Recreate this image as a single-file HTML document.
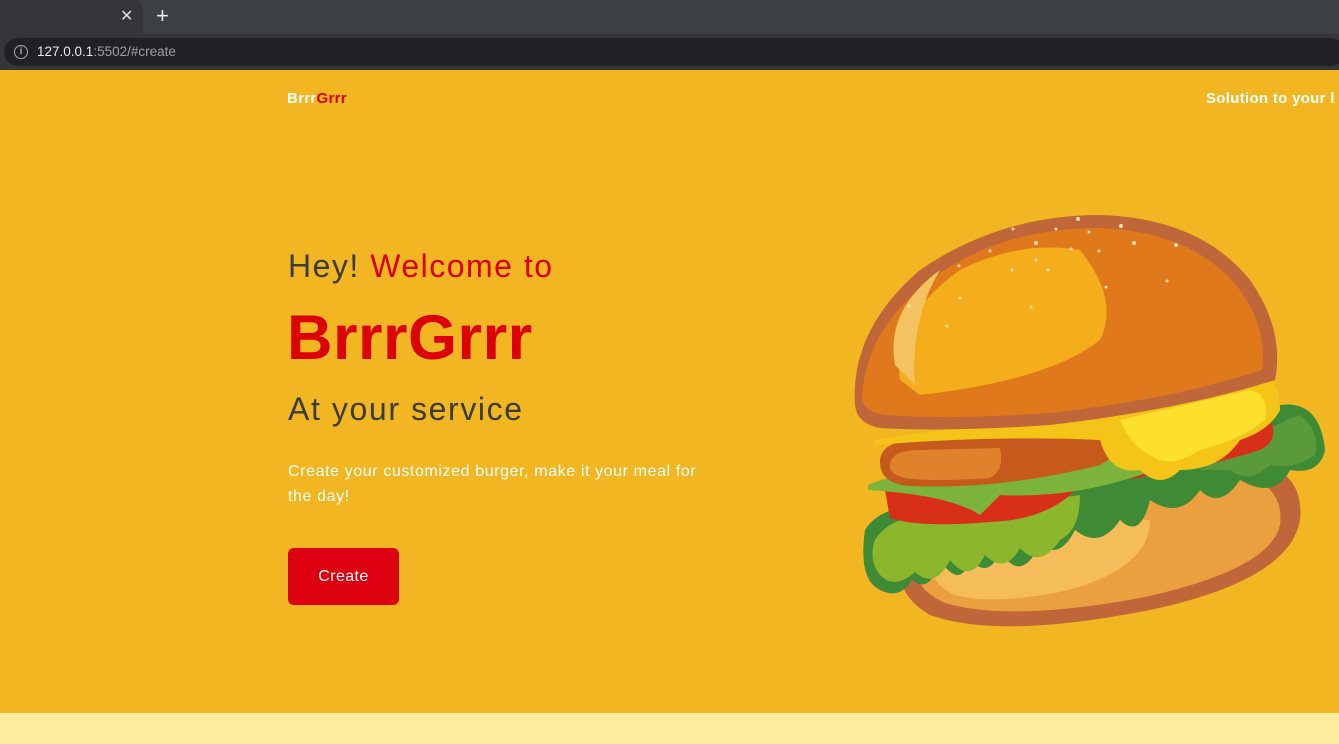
<!DOCTYPE html>
<html><head><meta charset="utf-8"><style>
*{margin:0;padding:0;box-sizing:border-box}
body{width:1339px;height:744px;overflow:hidden;font-family:"Liberation Sans",sans-serif;background:#f2b622;position:relative}
.tabs{position:absolute;left:0;top:0;width:1339px;height:34px;background:#3c3f43}
.tab{position:absolute;left:0;top:0;width:143px;height:34px;background:#35363a;border-radius:0 8px 0 0}
.x{position:absolute;left:120px;top:6px;color:#ddd;font-size:16px}
.plus{position:absolute;left:156px;top:3px;color:#eee;font-size:22px}
.bar{position:absolute;left:0;top:34px;width:1339px;height:36px;background:#35363a}
.pill{position:absolute;left:4px;top:4px;width:1340px;height:28px;background:#202124;border-radius:14px}
.info{position:absolute;left:10px;top:7px;width:14px;height:14px;border:1.5px solid #aaa;border-radius:50%;color:#aaa;font-size:10px;text-align:center;line-height:11px;font-weight:bold}
.url{position:absolute;left:33px;top:6px;font-size:13.5px;color:#9aa0a6}
.url b{color:#e8eaed;font-weight:normal}
.abs{position:absolute;white-space:nowrap}
.red{color:#dc0000}
</style></head><body>
<div class="tabs"><div class="tab"><span class="x">✕</span></div><span class="plus">+</span></div>
<div class="bar"><div class="pill"><div class="info">i</div><div class="url"><b>127.0.0.1</b>:5502/#create</div></div></div>
<div class="abs" style="left:287px;top:90px;font-size:15px;font-weight:bold;color:#fff;letter-spacing:0.3px">Brrr<span class="red">Grrr</span></div>
<div class="abs" style="left:1206px;top:90px;font-size:15px;font-weight:bold;color:#fff;letter-spacing:0.3px">Solution to your l</div>
<div class="abs" style="left:288px;top:248px;font-size:32px;color:#3b3b3b;letter-spacing:1.5px">Hey! <span class="red">Welcome to</span></div>
<div class="abs" style="left:287px;top:302px;font-size:63px;font-weight:bold;color:#dc0000;letter-spacing:0.5px">BrrrGrrr</div>
<div class="abs" style="left:288px;top:391px;font-size:32px;color:#3b3b3b;letter-spacing:1.6px">At your service</div>
<div class="abs" style="left:288px;top:459px;font-size:16px;color:#fff;line-height:25px;white-space:normal;width:432px;letter-spacing:0.6px">Create your customized burger, make it your meal for the day!</div>
<div class="abs" style="left:288px;top:548px;width:111px;height:57px;background:#dc0010;border-radius:6px;color:#fff;font-size:16px;text-align:center;line-height:57px;letter-spacing:0.4px">Create</div>
<div class="abs" style="left:0;top:713px;width:1339px;height:31px;background:#feeb9c"></div>
<svg class="abs" style="left:0;top:0" width="1339" height="744">
<path d="M900 560 Q905 480 1000 470 L1250 460 Q1305 470 1300 520 Q1290 580 1150 610 Q1000 640 930 615 Q895 595 900 560Z" fill="#c0673a"/>
<path d="M915 560 Q920 495 1010 485 L1240 475 Q1285 485 1280 525 Q1270 570 1140 598 Q1010 622 945 603 Q912 588 915 560Z" fill="#eba040"/>
<path d="M930 560 Q940 520 1010 510 L1150 520 Q1150 570 1060 592 Q990 605 955 595 Q928 582 930 560Z" fill="#f5bd5a"/>
<path d="M865 530 Q880 505 930 505 L1100 480 Q1200 470 1280 405 Q1320 400 1325 450 Q1320 475 1290 470 Q1275 500 1240 480 Q1220 510 1200 490 Q1180 520 1150 500 Q1140 540 1120 520 Q1100 550 1075 530 Q1060 560 1040 545 Q1020 585 1000 550 Q990 580 970 560 Q960 590 940 560 Q930 595 912 580 Q900 600 880 590 Q858 580 865 530Z" fill="#3e8a35"/>
<path d="M875 540 Q890 515 935 515 L1080 495 Q1080 530 1060 540 Q1040 570 1020 548 Q1005 575 985 555 Q970 585 950 560 Q935 590 915 572 Q895 590 880 575 Q868 560 875 540Z" fill="#8cb62c"/>
<path d="M1200 470 Q1280 420 1300 415 Q1320 430 1315 455 Q1295 470 1270 465 Q1250 485 1230 470Z" fill="#5b9a3a"/>
<path d="M885 490 L1000 485 L1270 420 Q1280 440 1260 450 Q1180 475 1080 485 Q1050 520 990 522 Q920 528 890 518Z" fill="#d83018"/>
<path d="M868 485 Q900 470 1000 470 L1200 450 Q1100 500 1000 495 L980 515 Q950 495 868 490Z" fill="#7cb33a"/>
<path d="M880 462 Q880 440 920 440 L1110 425 Q1130 450 1100 465 Q1000 490 910 486 Q880 484 880 462Z" fill="#c55a1c"/>
<path d="M890 464 Q892 450 920 450 L1000 448 Q1005 470 990 478 Q930 482 905 478 Q888 474 890 464Z" fill="#e0822c"/>
<path d="M875 440 Q1000 420 1100 420 L1250 380 Q1280 370 1280 410 Q1270 430 1240 440 Q1220 470 1180 470 Q1160 490 1140 470 Q1110 475 1100 440 Q1000 435 875 445Z" fill="#f4c418"/>
<path d="M1120 420 L1250 390 Q1270 395 1265 420 Q1240 440 1200 450 Q1170 470 1150 455 Q1130 445 1120 420Z" fill="#fde02e"/>
<path d="M855 405 Q850 330 920 270 Q1000 215 1100 215 Q1200 218 1250 280 Q1285 330 1275 380 Q1180 410 1050 425 Q950 432 880 428 Q857 424 855 405Z" fill="#c0673a"/>
<path d="M862 398 Q865 330 930 280 Q1000 228 1100 228 Q1195 232 1240 290 Q1268 330 1262 370 Q1170 400 1050 413 Q950 420 885 415 Q864 412 862 398Z" fill="#e0781c"/>
<path d="M900 380 Q890 320 960 270 Q1020 240 1080 250 Q1120 300 1100 340 Q1050 380 920 395Z" fill="#f4ae1c"/>
<path d="M895 365 Q885 310 940 270 Q910 320 915 385Z" fill="#f4c260"/>
<g fill="#f8e0b0">
<circle cx="1078" cy="219" r="2"/><circle cx="1121" cy="226" r="2"/><circle cx="1013" cy="229" r="1.5"/><circle cx="1056" cy="229" r="1.5"/><circle cx="1089" cy="232" r="1.5"/><circle cx="1134" cy="243" r="2"/><circle cx="1176" cy="245" r="2"/><circle cx="1036" cy="243" r="2"/><circle cx="1071" cy="249" r="1.5"/><circle cx="1099" cy="251" r="1.5"/><circle cx="990" cy="251" r="1.5"/><circle cx="1012" cy="270" r="1.5"/><circle cx="1048" cy="270" r="1.5"/><circle cx="1106" cy="287" r="1.5"/><circle cx="1167" cy="281" r="1.5"/><circle cx="960" cy="298" r="1.5"/><circle cx="1031" cy="307" r="1.5"/><circle cx="909" cy="306" r="1.5"/><circle cx="947" cy="326" r="1.5"/><circle cx="1036" cy="260" r="1.5"/><circle cx="959" cy="266" r="1.5"/>
</g>
</svg>
</body></html>
